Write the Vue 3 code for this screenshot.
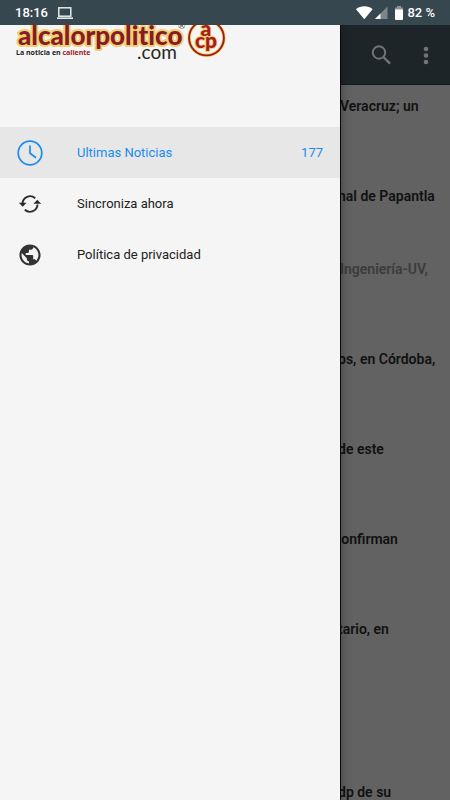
<script setup>
const menu = [
  { id: 'latest', label: 'Ultimas Noticias', count: '177', active: true },
  { id: 'sync', label: 'Sincroniza ahora' },
  { id: 'privacy', label: 'Política de privacidad' },
]

const headlines = [
  { text: 'Veracruz; un', cut: 'whole' },
  { text: 'nal de Papantla', cut: 'split', short: true },
  { text: 'Ingeniería-UV,', cut: 'whole', read: true },
  { text: 'os, en Córdoba,', cut: 'split' },
  { text: 'de este', cut: 'split' },
  { text: 'confirman', cut: 'under' },
  { text: 'tario, en', cut: 'split' },
  { text: '', cut: 'whole', short: true },
  { text: 'dp de su', cut: 'split' },
]
</script>

<template>
  <div class="screen">
    <header class="status">
      <span class="time">18:16</span>
      <svg class="laptop" width="18" height="14" viewBox="0 0 18 14" aria-hidden="true">
        <rect x="2.8" y="1.8" width="12" height="8.4" fill="none" stroke="#e4e8ea" stroke-width="1.5" />
        <rect x="1" y="11.4" width="16" height="1.6" fill="#e4e8ea" />
      </svg>
      <span class="spacer"></span>
      <svg width="32" height="16" viewBox="0 0 32 16" aria-hidden="true">
        <path d="M0 4.200 C4.800 .4 12 .4 16.600 4.200 L8.300 14.200 Z" fill="#fff" />
        <path d="M31.500 1.500 V14 H19 Z" fill="#7b878c" />
        <path d="M24.500 8.500 V14 H19 Z" fill="#fff" />
      </svg>
      <svg class="battery" width="10" height="16" viewBox="0 0 10 16" aria-hidden="true">
        <path d="M3 1 H7 V2.600 H9 V5 H1 V2.600 H3 Z" fill="#8b969b" />
        <path d="M1 4.600 H9 V14 Q9 15 8 15 H2 Q1 15 1 14 Z" fill="#fff" />
      </svg>
      <span class="percent">82 %</span>
    </header>

    <div class="stage">
      <div class="page">
        <div class="toolbar">
          <button class="tool" type="button" aria-label="Buscar">
            <svg width="24" height="24" viewBox="0 0 24 24" aria-hidden="true">
              <circle cx="10" cy="9.500" r="6.200" fill="none" stroke="#707476" stroke-width="2" />
              <path d="M14.400 14 L21 20.600" stroke="#707476" stroke-width="2.400" />
            </svg>
          </button>
          <button class="tool" type="button" aria-label="Más opciones">
            <svg width="24" height="24" viewBox="0 0 24 24" fill="#707476" aria-hidden="true">
              <circle cx="12" cy="6" r="2.300" />
              <circle cx="12" cy="12.500" r="2.300" />
              <circle cx="12" cy="19" r="2.300" />
            </svg>
          </button>
        </div>
        <ul class="news">
          <li
            v-for="(item, i) in headlines"
            :key="i"
            class="headline"
            :class="[item.cut, { short: item.short, read: item.read }]"
          >{{ item.text }}</li>
        </ul>
      </div>

      <aside class="drawer">
        <div class="brand">
          <svg class="logo" width="220" height="40" viewBox="0 0 220 40" role="img" aria-label="alcalorpolitico.com">
            <text class="name" x="8" y="20">alcalorpolitico</text>
            <text class="mark" x="168" y="4">®</text>
            <text class="tag" x="6" y="30">La noticia en <tspan fill="#9a2024">caliente</tspan></text>
            <text class="domain" x="127" y="34">.com</text>
            <circle cx="196.500" cy="13" r="17.400" fill="#f5f5f5" stroke="#f5d56a" stroke-width="3.600" />
            <circle cx="196.500" cy="13" r="17.400" fill="none" stroke="#9c1c1f" stroke-width="1.900" />
            <text class="seal" x="196" y="11" text-anchor="middle">a</text>
            <text class="seal" x="196" y="23" text-anchor="middle">cp</text>
          </svg>
        </div>
        <nav>
          <a v-for="item in menu" :key="item.id" href="#" class="entry" :class="{ active: item.active }">
            <span class="icon">
              <svg v-if="item.id === 'latest'" width="26" height="26" viewBox="0 0 26 26" fill="none" stroke="#1a8cf0" aria-hidden="true">
                <circle cx="13" cy="13" r="11.800" stroke-width="1.700" />
                <path d="M13 5.500 V13.300 L19 17.800" stroke-width="1.700" />
              </svg>
              <svg v-else-if="item.id === 'sync'" width="24" height="20" viewBox="0 0 24 20" fill="none" stroke="#2b2b2b" stroke-width="1.900" aria-hidden="true">
                <path d="M17.200 4.200 A7.600 7.600 0 0 0 4.500 9.500" />
                <path d="M6.800 15.800 A7.600 7.600 0 0 0 19.500 10.500" />
                <path d="M.8 8.700 H8.600 L4.700 12.800 Z M15.400 9.800 H23.200 L19.300 5.700 Z" fill="#2b2b2b" stroke="none" />
              </svg>
              <svg v-else width="26" height="26" viewBox="-0.300 -0.300 24.600 24.600" fill="#333" aria-hidden="true">
                <path d="M12 2C6.480 2 2 6.480 2 12s4.480 10 10 10 10-4.480 10-10S17.520 2 12 2zm-1 17.930c-3.950-.49-7-3.850-7-7.930 0-.62.080-1.210.210-1.790L9 15v1c0 1.100.9 2 2 2v1.930zm6.900-2.540c-.26-.81-1-1.390-1.900-1.390h-1v-3c0-.55-.45-1-1-1H8v-2h2c.55 0 1-.45 1-1V7h2c1.100 0 2-.9 2-2v-.41c2.930 1.190 5 4.060 5 7.410 0 2.080-.8 3.970-2.100 5.390z" />
              </svg>
            </span>
            <span class="label">{{ item.label }}</span>
            <span v-if="item.count" class="count">{{ item.count }}</span>
          </a>
        </nav>
      </aside>
    </div>
  </div>
</template>

<style>
body {
  margin: 0;
}
</style>

<style scoped>
.screen {
  --drawer: 340px;
  display: flex;
  flex-direction: column;
  height: 100vh;
  overflow: hidden;
  font-family: Roboto, "Liberation Sans", sans-serif;
}

.status {
  display: flex;
  align-items: center;
  flex: none;
  height: 25px;
  padding: 0 15px;
  background: #37474f;
  color: #fff;
  font-size: 13px;
  font-weight: 500;
}

.laptop {
  margin-left: 8px;
}

.spacer {
  flex: 1;
}

.battery {
  margin: 0 3px 0 6px;
}

.stage {
  position: relative;
  flex: 1;
  min-height: 0;
}

.page {
  height: 100%;
  overflow: hidden;
  background: #626262;
}

.toolbar {
  display: flex;
  justify-content: flex-end;
  align-items: center;
  gap: 21px;
  height: 60px;
  padding: 0 12px;
  border-bottom: 1px solid #101c22;
  box-sizing: border-box;
  background: #1e2528;
}

.tool {
  display: flex;
  padding: 0;
  border: 0;
  background: none;
}

.news {
  margin: 0;
  padding: 0;
  list-style: none;
}

.headline {
  box-sizing: border-box;
  height: 90px;
  padding-top: 11px;
  color: #111;
  font-size: 14px;
  font-weight: 600;
  line-height: 20px;
  white-space: nowrap;
}

.headline.short {
  height: 73px;
}

.headline.read {
  color: #3c3c3c;
}

.headline.whole {
  padding-left: 340px;
}

.headline.split {
  padding-left: 338px;
}

.headline.under {
  padding-left: 334px;
}

.drawer {
  position: absolute;
  inset: 0 auto 0 0;
  width: var(--drawer);
  border-right: 1px solid #080808;
  background: #f5f5f5;
  box-shadow: 0 0 10px rgba(0, 0, 0, 0.35);
  clip-path: inset(0 -20px 0 0);
}

.brand {
  height: 102px;
}

.logo {
  display: block;
  margin-left: 10px;
  overflow: hidden;
}

.logo text {
  font-family: Lato, "Open Sans", sans-serif;
  font-variant-ligatures: none;
}

.logo .name,
.logo .seal {
  fill: #861c24;
  stroke: #f2cf72;
  stroke-width: 4px;
  stroke-linejoin: round;
  paint-order: stroke;
  font-size: 26px;
  font-weight: 900;
}

.logo .seal {
  fill: #a81c20;
  stroke-width: 2px;
  font-size: 21px;
}

.logo .mark {
  fill: #555;
  font-size: 9px;
}

.logo .tag {
  fill: #222;
  font-family: "Open Sans", "Noto Sans", sans-serif;
  font-size: 7px;
  font-weight: 700;
}

.logo .domain {
  fill: #262626;
  font-size: 19px;
}

.entry {
  display: flex;
  align-items: center;
  height: 51px;
  padding: 0 17px;
  color: #212121;
  font-size: 13px;
  text-decoration: none;
}

.entry.active {
  background: #e7e7e7;
  color: #1a8cf0;
}

.icon {
  display: flex;
  justify-content: center;
  width: 26px;
  margin-right: 34px;
}

.label {
  flex: 1;
}
</style>
